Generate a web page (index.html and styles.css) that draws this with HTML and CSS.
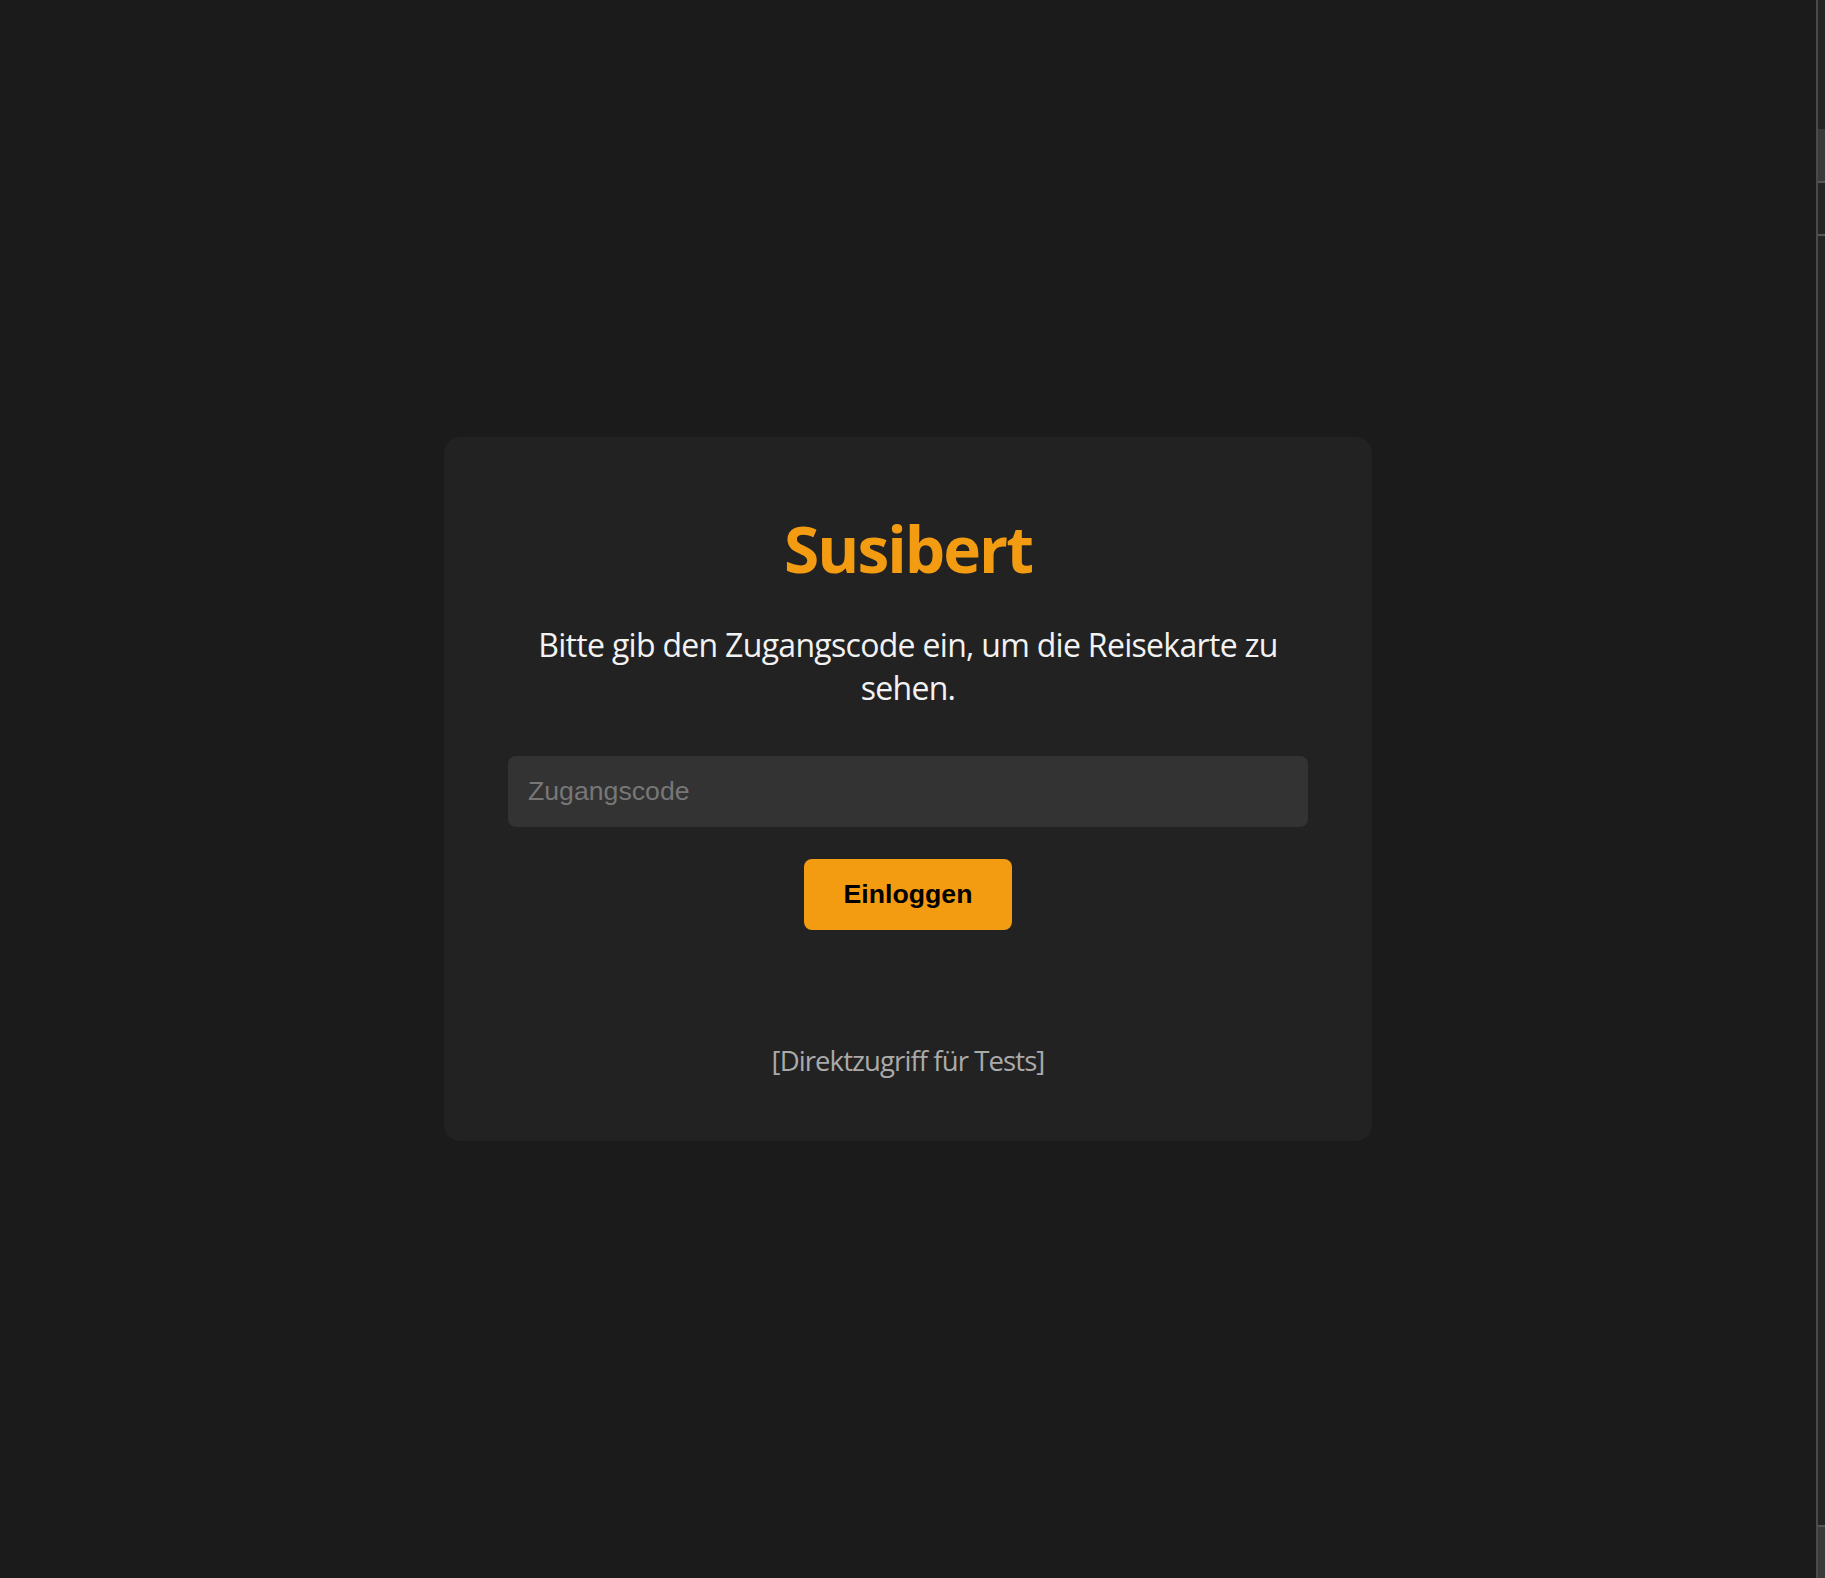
FILE: index.html
```html
<!DOCTYPE html>
<html lang="de">
<head>
<meta charset="utf-8">
<title>Susibert</title>
<link rel="stylesheet" href="styles.css">
</head>
<body>
<main class="stage">
  <section class="card">
    <h1 class="title">Susibert</h1>
    <p class="lead">Bitte gib den Zugangscode ein, um die Reisekarte zu sehen.</p>
    <input class="code" type="password" placeholder="Zugangscode">
    <button class="login" type="button">Einloggen</button>
    <a class="direct" href="#">[Direktzugriff für Tests]</a>
  </section>
</main>
<aside class="rail">
  <div class="seg seg-a"></div>
  <div class="seg seg-b"></div>
  <div class="seg seg-c"></div>
  <div class="seg seg-d"></div>
  <div class="seg seg-e"></div>
</aside>
</body>
</html>
```
FILE: styles.css
```css
html, body {
  margin: 0;
  height: 100%;
}
body {
  background: #1b1b1b;
  display: flex;
  overflow: hidden;
  font-family: "Open Sans", "Noto Sans", sans-serif;
}
.stage {
  flex: 1;
  display: flex;
  align-items: center;
  justify-content: center;
}
.card {
  width: 800px;
  padding: 74px 64px 58px;
  background: #222222;
  border-radius: 16px;
  display: flex;
  flex-direction: column;
  align-items: center;
  text-align: center;
}
.title {
  margin: 0 0 35px;
  font-size: 64px;
  line-height: 76.8px;
  font-weight: 700;
  color: #f39c12;
  letter-spacing: -2px;
}
.lead {
  margin: 0 0 47px;
  font-size: 32px;
  line-height: 43px;
  color: #f2f2f2;
  letter-spacing: -0.7px;
}
.code {
  width: 800px;
  height: 71px;
  box-sizing: border-box;
  margin: 0 0 32px;
  padding: 0 20px;
  border: none;
  border-radius: 8px;
  background: #333333;
  color: #eeeeee;
  font-family: "Liberation Sans", Arial, sans-serif;
  font-size: 26.67px;
  outline: none;
}
.code::placeholder {
  color: #777777;
}
.login {
  width: 208px;
  height: 71px;
  border: none;
  border-radius: 8px;
  background: #f39c12;
  color: #000000;
  font-family: "Liberation Sans", Arial, sans-serif;
  font-size: 26.67px;
  font-weight: 700;
  padding: 0;
}
.direct {
  margin-top: 109px;
  font-size: 27.5px;
  line-height: 44px;
  color: #aaaaaa;
  text-decoration: none;
  letter-spacing: -0.9px;
}
.rail {
  width: 7px;
  border-left: 2px solid #4a4a4a;
  background: #242424;
  display: flex;
  flex-direction: column;
}
.seg {
  border-bottom: 2px solid #555555;
}
.seg-a { height: 129px; border-bottom: none; }
.seg-b { height: 52px; background: #3a3a3a; }
.seg-c { height: 51px; }
.seg-d { flex: 1; }
.seg-e { height: 51px; background: #3a3a3a; border-bottom: none; }
```
